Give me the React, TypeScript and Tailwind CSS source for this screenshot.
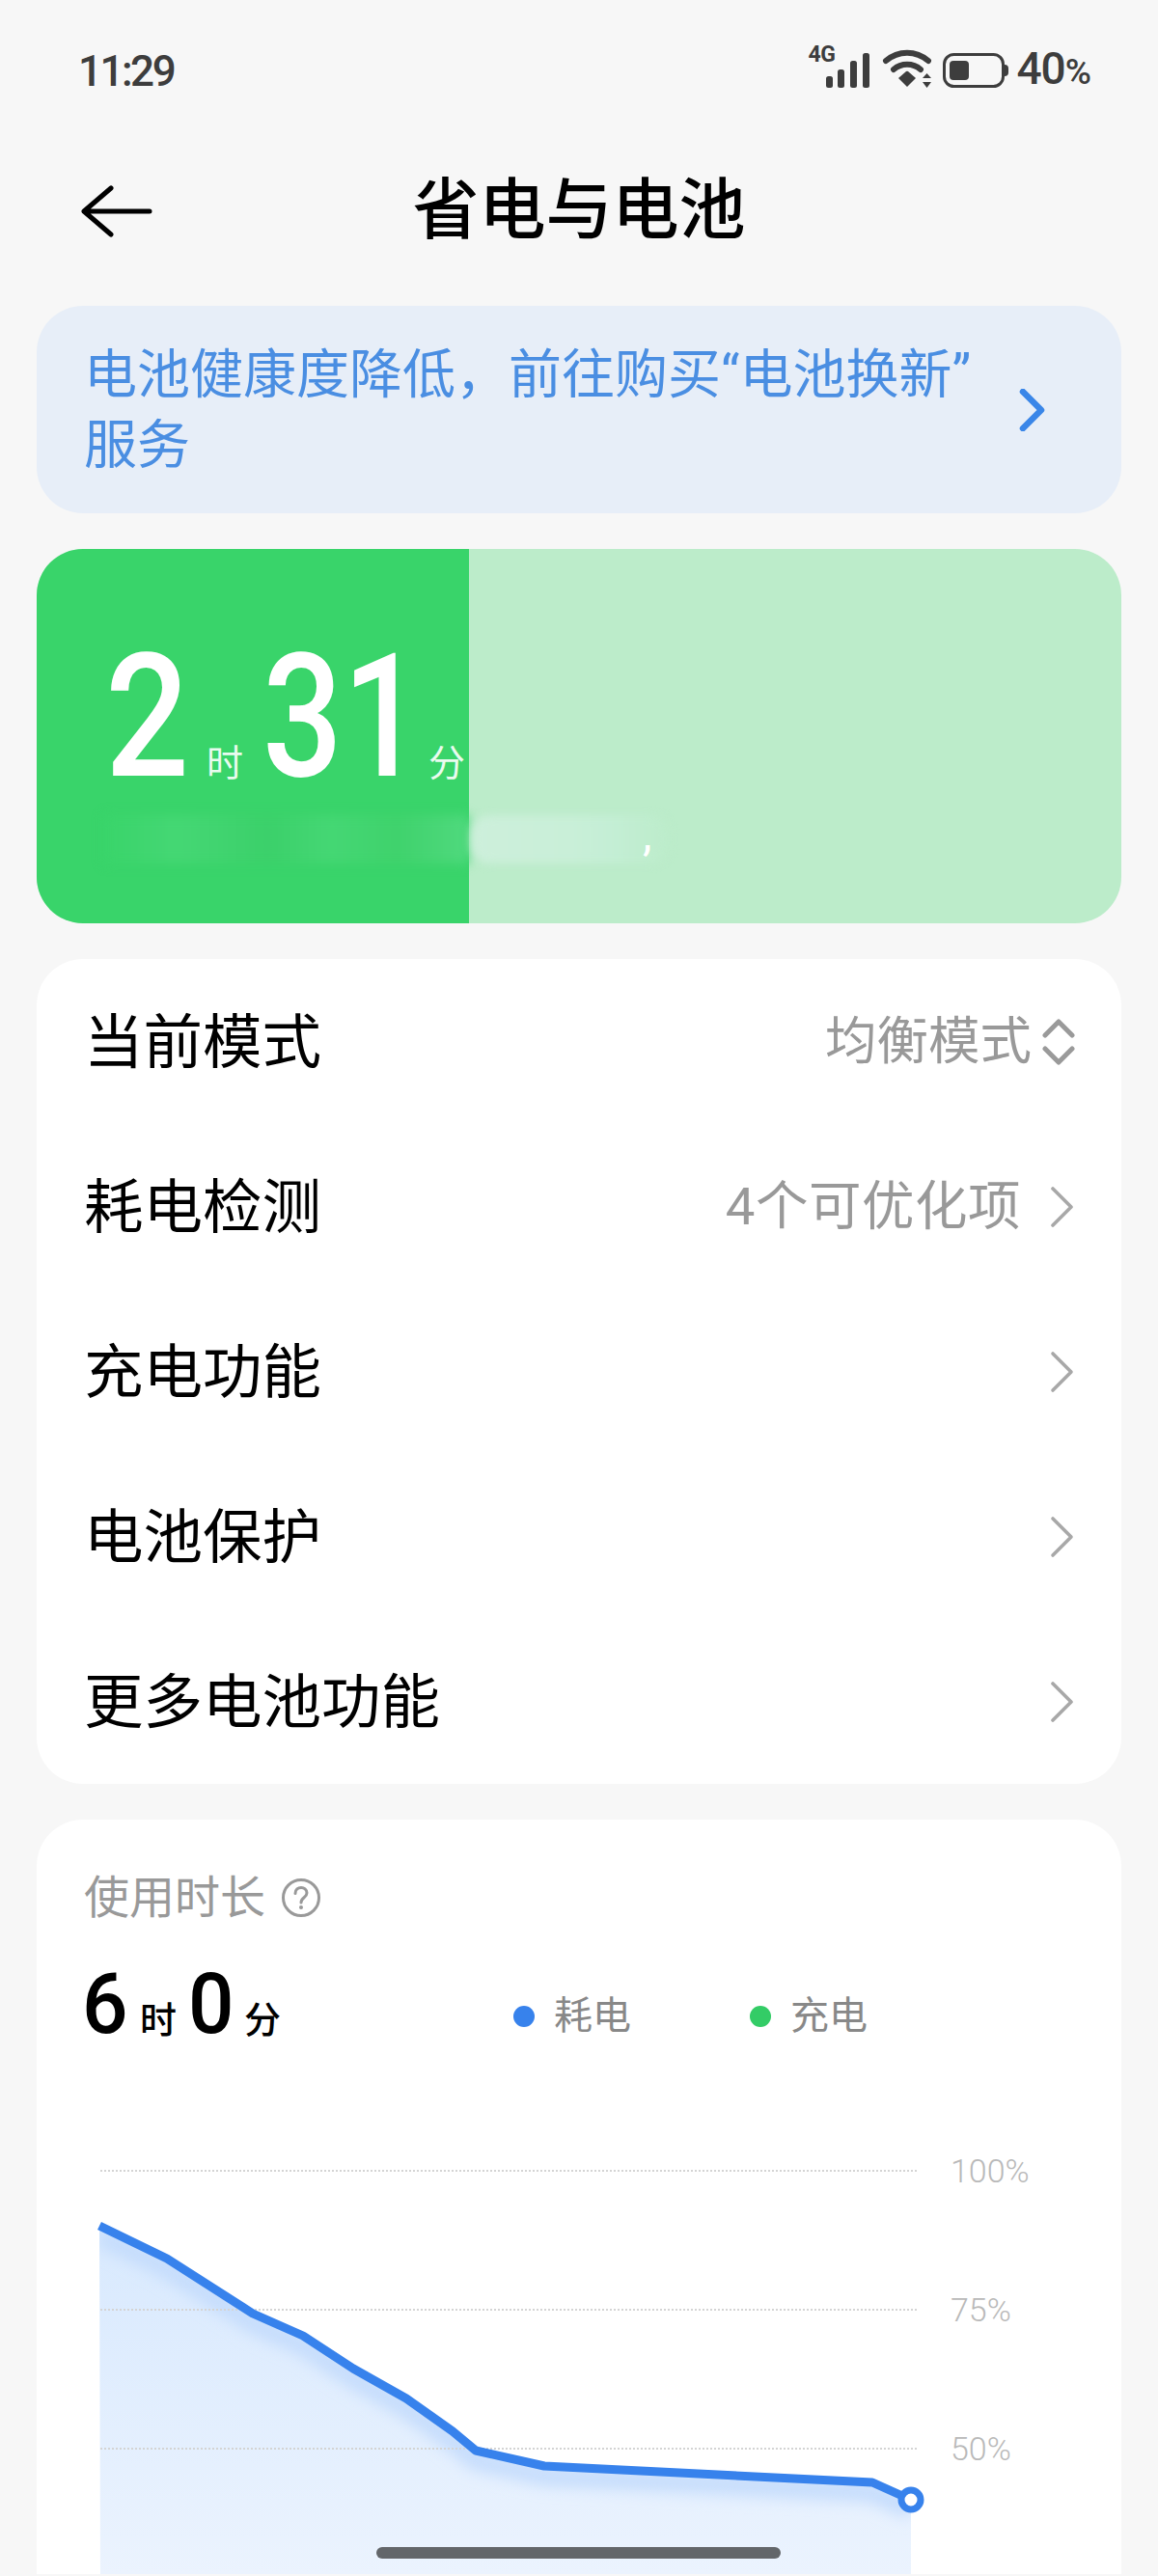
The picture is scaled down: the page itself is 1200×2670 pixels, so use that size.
import React from "react";

const FONT = { fontFamily: '"Roboto","Noto Sans CJK SC",sans-serif' };

function Chevron() {
  return (
    <svg width="26" height="44" viewBox="0 0 26 44" fill="none" className="ml-[16px] shrink-0">
      <path d="M3 3 L22 22 L3 41" stroke="#a8a8a8" strokeWidth="3.6" strokeLinecap="round" strokeLinejoin="round" />
    </svg>
  );
}

function UpDown() {
  return (
    <svg width="34" height="50" viewBox="0 0 34 50" fill="none" className="-ml-[3px] shrink-0">
      <path d="M3 18 L17 4 L31 18" stroke="#9a9a9a" strokeWidth="5" strokeLinecap="round" strokeLinejoin="round" />
      <path d="M3 32 L17 46 L31 32" stroke="#9a9a9a" strokeWidth="5" strokeLinecap="round" strokeLinejoin="round" />
    </svg>
  );
}

function Row({ label, value, icon, wide }: { label: string; value?: string; icon: React.ReactNode; wide?: boolean }) {
  return (
    <div className="flex h-[171px] items-center justify-between pl-[49px] pr-[48px]">
      <span className="pt-[5px] text-[61.500px] leading-none text-black">{label}</span>
      <div className="flex items-center gap-[14px]">
        {value && (
          <span className={wide ? "text-[54.500px] leading-none tracking-[0.500px] text-[#999999]" : "text-[53.500px] leading-none text-[#999999]"}>
            {value}
          </span>
        )}
        {icon}
      </div>
    </div>
  );
}

function StatusIcons() {
  return (
    <svg width="210" height="44" viewBox="836 50 210 44" fill="none" className="shrink-0">
      <rect x="855" y="78" width="7" height="12" rx="2.5" fill="#3d3d3d" />
      <rect x="867" y="71" width="7" height="19" rx="2.5" fill="#3d3d3d" />
      <rect x="880" y="62" width="7" height="28" rx="2.5" fill="#3d3d3d" />
      <rect x="893" y="54" width="7" height="36" rx="2.5" fill="#3d3d3d" />
      <path d="M917 62 C930 51 948 51 961 62" stroke="#3d3d3d" strokeWidth="6" strokeLinecap="round" />
      <path d="M925 71 C933 64 945 64 953 71" stroke="#3d3d3d" strokeWidth="6" strokeLinecap="round" />
      <path d="M930 80 L938 73 Q939 72.500 940 73 L948 80 L939 89 Z" fill="#3d3d3d" />
      <path d="M955 80 L959.500 75 L964 80 Z" fill="#3d3d3d" />
      <path d="M955 84 L959.500 90 L964 84 Z" fill="#3d3d3d" />
      <rect x="977.500" y="55.500" width="61" height="33" rx="10" stroke="#3d3d3d" strokeWidth="3" />
      <rect x="983" y="62" width="20" height="20" rx="4" fill="#3d3d3d" />
      <path d="M1040 66 Q1044 66 1044 70 V74 Q1044 78 1040 78 Z" fill="#3d3d3d" />
    </svg>
  );
}

function Chart() {
  const pts = "103,2309 173,2343 262,2400 314,2423 366,2457 421,2488 469,2522 493,2542 564,2558 904,2575 944,2593";
  return (
    <svg width="1124" height="440" viewBox="38 2230 1124 440" fill="none" className="mt-[112px] block">
      <defs>
        <linearGradient id="area" x1="0" y1="2309" x2="0" y2="2670" gradientUnits="userSpaceOnUse">
          <stop offset="0" stopColor="#d8e9fe" />
          <stop offset="1" stopColor="#ebf3fe" />
        </linearGradient>
        <clipPath id="clip">
          <polygon points={`${pts} 944,2670 104,2670`} />
        </clipPath>
        <filter id="soft" x="-10%" y="-20%" width="120%" height="140%">
          <feGaussianBlur stdDeviation="8" />
        </filter>
      </defs>
      <polygon points={`${pts} 944,2670 104,2670`} fill="url(#area)" />
      <g clipPath="url(#clip)">
        <polyline points={pts} transform="translate(0 10)" stroke="#c4dcfc" strokeWidth="20" filter="url(#soft)" />
      </g>
      {[2252, 2396, 2540].map((y) => (
        <line key={y} x1="104" x2="951" y1={y} y2={y} stroke="#d4d4d4" strokeWidth="2" strokeDasharray="2 2" />
      ))}
      <polyline points={pts} stroke="#3782ec" strokeWidth="9" strokeLinejoin="round" />
      <circle cx="944" cy="2593" r="10" fill="#ffffff" stroke="#3782ec" strokeWidth="7" />
      <g fill="#b9b9b9" fontSize="34" fontWeight="300" style={{ fontFamily: '"Roboto",sans-serif' }}>
        <text x="985" y="2264">100%</text>
        <text x="985" y="2408">75%</text>
        <text x="985" y="2552">50%</text>
      </g>
    </svg>
  );
}

export default function App() {
  return (
    <div className="relative h-[2670px] w-[1200px] overflow-hidden bg-[#f7f7f7]" style={FONT}>
      <div className="flex h-[142px] items-start justify-between pl-[81px] pr-[70px] pt-[49px]">
        <span className="text-[44px] font-medium leading-[50px] tracking-[-2.500px] text-[#3d3d3d]">11:29</span>
        <div className="relative flex items-center gap-[6px]">
          <span className="absolute left-[0px] top-[-3px] text-[23px] font-bold leading-[22px] tracking-[-0.500px] text-[#3d3d3d]">4G</span>
          <StatusIcons />
          <span className="text-[46px] font-medium leading-[44px] tracking-[-1px] text-[#3d3d3d]">
            40<span className="text-[37px]">%</span>
          </span>
        </div>
      </div>

      <div className="relative flex h-[175px] items-start justify-center">
        <svg width="76" height="54" viewBox="0 0 76 54" fill="none" className="absolute left-[84px] top-[50px]">
          <path d="M31 3 L3 27 L31 51 M3 27 H71" stroke="#000000" strokeWidth="5" strokeLinecap="round" strokeLinejoin="round" />
        </svg>
        <h1 className="mt-[39px] text-[69px] font-medium leading-[76px] text-black">省电与电池</h1>
      </div>

      <div className="mx-[38px] flex h-[215px] items-center justify-between rounded-[48px] bg-[#e7eef8] pl-[49px] pr-[78px]">
        <p className="text-[55px] leading-[73px] text-[#4a8ee2]">
          电池健康度降低，前往购买“电池换新”
          <br />
          服务
        </p>
        <svg width="30" height="44" viewBox="0 0 30 44" fill="none" className="shrink-0">
          <path d="M6 3 L25 22 L6 41" stroke="#3a86e8" strokeWidth="6.500" strokeLinecap="round" strokeLinejoin="round" />
        </svg>
      </div>

      <div className="relative mx-[38px] mt-[37px] h-[388px] overflow-hidden rounded-[48px] bg-[#bcecca]">
        <div className="absolute inset-y-0 left-0 w-[448px] bg-[#39d46a]" />
        <div className="absolute left-[70px] top-[276px] h-[50px] w-[378px] bg-[linear-gradient(90deg,#39d46a,#45d774_20%,#3bd06a_45%,#45d774_62%,#3fd26c_80%,#50d97e)] blur-[6px]" />
        <div className="absolute left-[450px] top-[276px] h-[50px] w-[206px] rounded-[20px] bg-[linear-gradient(90deg,#cdefdb,#c9efd8_50%,#c4eed5_70%,#bcecca)] blur-[5px]" />
        <div className="relative flex items-baseline pl-[71px] pt-[85px] leading-none text-white">
          <span className="inline-block w-[105px] origin-left scale-x-[0.86] text-[178px] font-medium leading-[178px]">2</span>
          <span className="text-[38px] text-[#e9fbef]">时</span>
          <span className="ml-[20px] inline-block w-[172px] origin-left scale-x-[0.82] text-[178px] font-medium leading-[178px]">31</span>
          <span className="text-[38px] text-[#e9fbef]">分</span>
        </div>
        <span className="absolute left-[628px] top-[272px] text-[48px] leading-none text-white">,</span>
      </div>

      <div className="mx-[38px] mt-[37px] rounded-[48px] bg-white">
        <Row label="当前模式" value="均衡模式" icon={<UpDown />} />
        <Row label="耗电检测" value="4个可优化项" icon={<Chevron />} wide />
        <Row label="充电功能" icon={<Chevron />} />
        <Row label="电池保护" icon={<Chevron />} />
        <Row label="更多电池功能" icon={<Chevron />} />
      </div>

      <div className="mx-[38px] mt-[37px] rounded-t-[48px] bg-white">
        <div className="flex h-[164px] flex-col pl-[49px] pt-[55px]">
          <div className="flex items-center gap-[16px] text-[#999999]">
            <span className="text-[47px] leading-[52px]">使用时长</span>
            <svg width="42" height="42" viewBox="0 0 42 42" fill="none">
              <circle cx="21" cy="21" r="18.500" stroke="#999999" strokeWidth="3" />
              <path d="M15 16.500 C15 8.500 27 8.500 27 16 C27 21 21 20.500 21 26" stroke="#999999" strokeWidth="3" strokeLinecap="round" />
              <circle cx="21" cy="31" r="2" fill="#999999" />
            </svg>
          </div>
        </div>
        <div className="-mt-[17px] mb-[-5px] flex h-[88px] items-baseline pl-[47px]">
          <span className="inline-block w-[52px] origin-left scale-x-[0.95] text-[88px] font-medium leading-[88px] text-black">6</span>
          <span className="ml-[8px] text-[38px] font-medium text-black">时</span>
          <span className="ml-[12px] inline-block w-[54px] origin-left scale-x-[0.95] text-[88px] font-medium leading-[88px] text-black">0</span>
          <span className="ml-[4px] text-[38px] font-medium text-black">分</span>
          <div className="ml-[241px] flex -translate-y-[6px] items-center gap-[20px]">
            <span className="h-[22px] w-[22px] rounded-full bg-[#3782ec]" />
            <span className="text-[40px] leading-none text-[#888888]">耗电</span>
          </div>
          <div className="ml-[123px] flex -translate-y-[6px] items-center gap-[20px]">
            <span className="h-[22px] w-[22px] rounded-full bg-[#33cc66]" />
            <span className="text-[40px] leading-none text-[#888888]">充电</span>
          </div>
        </div>
        <Chart />
      </div>

      <div className="absolute left-[390px] top-[2640px] h-[12px] w-[419px] rounded-full bg-[#63666a]" />
    </div>
  );
}
